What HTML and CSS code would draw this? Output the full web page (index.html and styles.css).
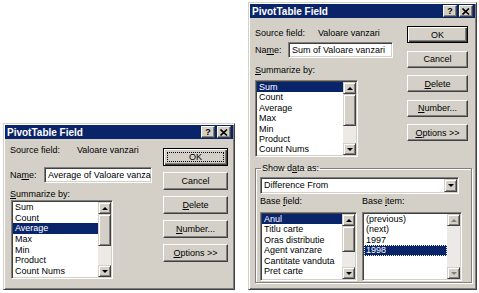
FILE: index.html
```html
<!DOCTYPE html>
<html lang="ro">
<head>
    <meta charset="UTF-8">
    <title>PivotTable Field</title>
    <link rel="stylesheet" href="styles.css">
</head>
<body>

    <div class="dlg dlg-small">
        <div class="titlebar">
            <span class="title">PivotTable Field</span>
            <span class="tbtns">
                <span class="tbtn">?</span>
                <span class="tbtn"><svg width="8" height="7" viewBox="0 0 8 7"><path d="M0.5 0.5L7 6.5M7 0.5L0.5 6.5" stroke="#000" stroke-width="1.6"/></svg></span>
            </span>
        </div>
        <div class="dlg-body">
            <div class="main">
                <div class="row src"><span class="lbl">Source field:</span><span class="val">Valoare vanzari</span></div>
                <div class="row name"><span class="lbl">Na<u>m</u>e:</span><div class="input">Average of Valoare vanzari</div></div>
                <div class="caption"><u>S</u>ummarize by:</div>
                <div class="listbox">
                    <ul class="items">
                        <li>Sum</li>
                        <li>Count</li>
                        <li class="sel">Average</li>
                        <li>Max</li>
                        <li>Min</li>
                        <li>Product</li>
                        <li>Count Nums</li>
                    </ul>
                    <div class="vscroll">
                        <span class="sbtn"><i class="up"></i></span>
                        <span class="thumb"></span>
                        <span class="track"></span>
                        <span class="sbtn"><i class="down"></i></span>
                    </div>
                </div>
            </div>
            <div class="buttons">
                <div class="btn default focus">OK</div>
                <div class="btn">Cancel</div>
                <div class="btn"><span><u>D</u>elete</span></div>
                <div class="btn"><span><u>N</u>umber...</span></div>
                <div class="btn"><span><u>O</u>ptions &gt;&gt;</span></div>
            </div>
        </div>
    </div>

    <div class="dlg dlg-big">
        <div class="titlebar">
            <span class="title">PivotTable Field</span>
            <span class="tbtns">
                <span class="tbtn">?</span>
                <span class="tbtn"><svg width="8" height="7" viewBox="0 0 8 7"><path d="M0.5 0.5L7 6.5M7 0.5L0.5 6.5" stroke="#000" stroke-width="1.6"/></svg></span>
            </span>
        </div>
        <div class="dlg-body">
            <div class="top">
                <div class="main">
                    <div class="row src"><span class="lbl">Source field:</span><span class="val">Valoare vanzari</span></div>
                    <div class="row name"><span class="lbl">Na<u>m</u>e:</span><div class="input">Sum of Valoare vanzari</div></div>
                    <div class="caption"><u>S</u>ummarize by:</div>
                    <div class="listbox">
                        <ul class="items">
                            <li class="sel">Sum</li>
                            <li>Count</li>
                            <li>Average</li>
                            <li>Max</li>
                            <li>Min</li>
                            <li>Product</li>
                            <li>Count Nums</li>
                        </ul>
                        <div class="vscroll">
                            <span class="sbtn"><i class="up"></i></span>
                            <span class="thumb"></span>
                            <span class="track"></span>
                            <span class="sbtn"><i class="down"></i></span>
                        </div>
                    </div>
                </div>
                <div class="buttons">
                    <div class="btn default">OK</div>
                    <div class="btn">Cancel</div>
                    <div class="btn"><span><u>D</u>elete</span></div>
                    <div class="btn"><span><u>N</u>umber...</span></div>
                    <div class="btn"><span><u>O</u>ptions &gt;&gt;</span></div>
                </div>
            </div>

            <fieldset class="group">
                <legend>Show d<u>a</u>ta as:</legend>
                <div class="combo">
                    <span class="combo-text">Difference From</span>
                    <span class="sbtn"><i class="down"></i></span>
                </div>
                <div class="base">
                    <div class="base-col field-col">
                        <div class="caption">Base <u>f</u>ield:</div>
                        <div class="listbox">
                            <ul class="items">
                                <li class="sel">Anul</li>
                                <li>Titlu carte</li>
                                <li>Oras distributie</li>
                                <li>Agent vanzare</li>
                                <li>Cantitate vanduta</li>
                                <li>Pret carte</li>
                            </ul>
                            <div class="vscroll">
                                <span class="sbtn"><i class="up"></i></span>
                                <span class="thumb"></span>
                                <span class="track"></span>
                                <span class="sbtn"><i class="down"></i></span>
                            </div>
                        </div>
                    </div>
                    <div class="base-col item-col">
                        <div class="caption">Base <u>i</u>tem:</div>
                        <div class="listbox">
                            <ul class="items">
                                <li>(previous)</li>
                                <li>(next)</li>
                                <li>1997</li>
                                <li class="sel dotted">1998</li>
                            </ul>
                            <div class="vscroll disabled">
                                <span class="sbtn"><i class="up"></i></span>
                                <span class="track"></span>
                                <span class="sbtn"><i class="down"></i></span>
                            </div>
                        </div>
                    </div>
                </div>
            </fieldset>
        </div>
    </div>

</body>
</html>
```

FILE: styles.css
```css
body {
    margin: 0;
    width: 479px;
    height: 293px;
    box-sizing: border-box;
    padding: 0 0 3px 3px;
    background-color: #ffffff;
    font-family: "Liberation Sans", Arial, sans-serif;
    font-size: 9px;
    color: #000000;
    display: flex;
    align-items: flex-end;
    gap: 13px;
}
u {
    text-decoration-thickness: 1px;
    text-underline-offset: 1px;
}

/* dialog frame */
.dlg {
    background-color: #d4d0c8;
    border: 1px solid;
    border-color: #d4d0c8 #404040 #404040 #d4d0c8;
    box-shadow: inset 1px 1px #ffffff, inset -1px -1px #808080;
    padding: 1px;
    box-sizing: border-box;
    display: flex;
    flex-direction: column;
}
.dlg-small {
    width: 232px;
    height: 167px;
}
.dlg-big {
    width: 229px;
    height: 288px;
}
.titlebar {
    height: 14px;
    background-color: #0a246a;
    color: #ffffff;
    display: flex;
    align-items: center;
    justify-content: space-between;
    padding: 0 2px 0 2px;
}
.title {
    font-size: 10px;
    font-weight: bold;
}
.tbtns {
    display: flex;
    gap: 2px;
}
.tbtn {
    width: 12px;
    height: 10px;
    background-color: #d4d0c8;
    border: 1px solid;
    border-color: #ffffff #404040 #404040 #ffffff;
    box-shadow: inset -1px -1px #808080;
    box-sizing: content-box;
    color: #000000;
    font-size: 9px;
    font-weight: bold;
    line-height: 10px;
    display: flex;
    align-items: center;
    justify-content: center;
}

/* layout */
.dlg-body {
    padding: 0 5px;
    display: flex;
    flex-direction: column;
}
.dlg-small .dlg-body {
    flex-direction: row;
}
.top {
    display: flex;
}
.main {
    display: flex;
    flex-direction: column;
}
.dlg-small .main {
    width: 153px;
    margin-top: 5px;
}
.dlg-big .main {
    width: 152px;
    margin-top: 9px;
}
.row {
    display: flex;
    align-items: center;
}
.src {
    height: 12px;
}
.src .lbl {
    width: 67px;
}
.dlg-big .src .lbl {
    width: 63px;
}
.name {
    height: 16px;
    margin-top: 11px;
}
.name .lbl {
    width: 34px;
}
.dlg-big .name {
    margin-top: 3px;
}
.dlg-big .name .lbl {
    width: 33px;
}
.caption {
    height: 12px;
    line-height: 12px;
    margin-top: 5px;
}
.dlg-big .main .caption {
    margin-top: 6px;
}

/* sunken controls */
.input, .listbox, .combo {
    background-color: #ffffff;
    border: 1px solid;
    border-color: #808080 #ffffff #ffffff #808080;
    box-shadow: inset 1px 1px #404040, inset -1px -1px #d4d0c8;
    padding: 1px;
    box-sizing: border-box;
}
.input {
    height: 16px;
    width: 108px;
    padding-left: 3px;
    line-height: 12px;
    white-space: nowrap;
    overflow: hidden;
}
.dlg-big .input {
    width: 105px;
}
.listbox {
    display: flex;
    width: 102px;
    height: 79px;
    margin-left: 1px;
}
.dlg-big .main .listbox {
    width: 103px;
    height: 77px;
    margin-top: 4px;
    margin-left: 0;
}
.items {
    list-style: none;
    margin: 0;
    padding: 0;
    flex: 1;
    overflow: hidden;
}
.items li {
    height: 10.7px;
    line-height: 10.7px;
    padding-left: 2px;
    white-space: nowrap;
}
.dlg-big .items li {
    height: 10.4px;
    line-height: 10.4px;
}
.items .sel {
    background-color: #0a246a;
    color: #ffffff;
}
.items .dotted {
    outline: 1px dotted #ffffff;
    outline-offset: -1px;
}

/* scrollbars */
.vscroll {
    width: 13px;
    display: flex;
    flex-direction: column;
}
.sbtn {
    width: 13px;
    height: 12px;
    flex: none;
    background-color: #d4d0c8;
    border: 1px solid;
    border-color: #d4d0c8 #404040 #404040 #d4d0c8;
    box-shadow: inset 1px 1px #ffffff, inset -1px -1px #808080;
    box-sizing: border-box;
    display: flex;
    align-items: center;
    justify-content: center;
}
.thumb {
    height: 30px;
    flex: none;
    background-color: #d4d0c8;
    border: 1px solid;
    border-color: #d4d0c8 #404040 #404040 #d4d0c8;
    box-shadow: inset 1px 1px #ffffff, inset -1px -1px #808080;
}
.track {
    flex: 1;
    background-color: #ebeae6;
}
.up, .down {
    width: 0;
    height: 0;
    border-left: 3px solid transparent;
    border-right: 3px solid transparent;
}
.up {
    border-bottom: 3px solid #000000;
}
.down {
    border-top: 3px solid #000000;
}
.disabled .up {
    border-bottom-color: #808080;
}
.disabled .down {
    border-top-color: #808080;
}
.field-col .thumb {
    height: 24px;
}

/* push buttons */
.buttons {
    display: flex;
    flex-direction: column;
}
.dlg-small .buttons {
    width: 65px;
    margin-top: 9px;
    gap: 6px;
}
.dlg-big .buttons {
    width: 61px;
    margin-top: 8px;
    gap: 7.5px;
}
.btn {
    height: 18px;
    background-color: #d4d0c8;
    border: 1px solid;
    border-color: #ffffff #404040 #404040 #ffffff;
    box-shadow: inset -1px -1px #808080;
    box-sizing: border-box;
    display: flex;
    align-items: center;
    justify-content: center;
    position: relative;
}
.dlg-big .btn {
    height: 17px;
}
.btn.default {
    border-color: #000000;
    box-shadow: inset 1px 1px #ffffff, inset -1px -1px #404040, inset -2px -2px #808080;
}
.btn.focus::after {
    content: "";
    position: absolute;
    inset: 3px;
    border: 1px dotted #000000;
}

/* show data as */
.group {
    margin: 5px 0 0 0;
    width: 217px;
    box-sizing: border-box;
    padding: 3px 4px 1px 4px;
    border: 1px solid #808080;
    box-shadow: inset 1px 1px #ffffff, 1px 1px #ffffff;
}
.group legend {
    padding: 0 1px;
    margin-left: 1px;
    line-height: 12px;
}
.combo {
    height: 17px;
    width: 199px;
    display: flex;
    align-items: stretch;
}
.combo-text {
    flex: 1;
    padding-left: 2px;
    line-height: 13px;
}
.combo .sbtn {
    height: auto;
}
.base {
    display: flex;
    gap: 5px;
    margin-top: 1px;
}
.base .caption {
    margin-top: 0;
    height: 17px;
    line-height: 12px;
}
.base .listbox {
    height: 69px;
    margin-left: 0;
}
.field-col .listbox {
    width: 97px;
}
.item-col .listbox {
    width: 100px;
}
```
